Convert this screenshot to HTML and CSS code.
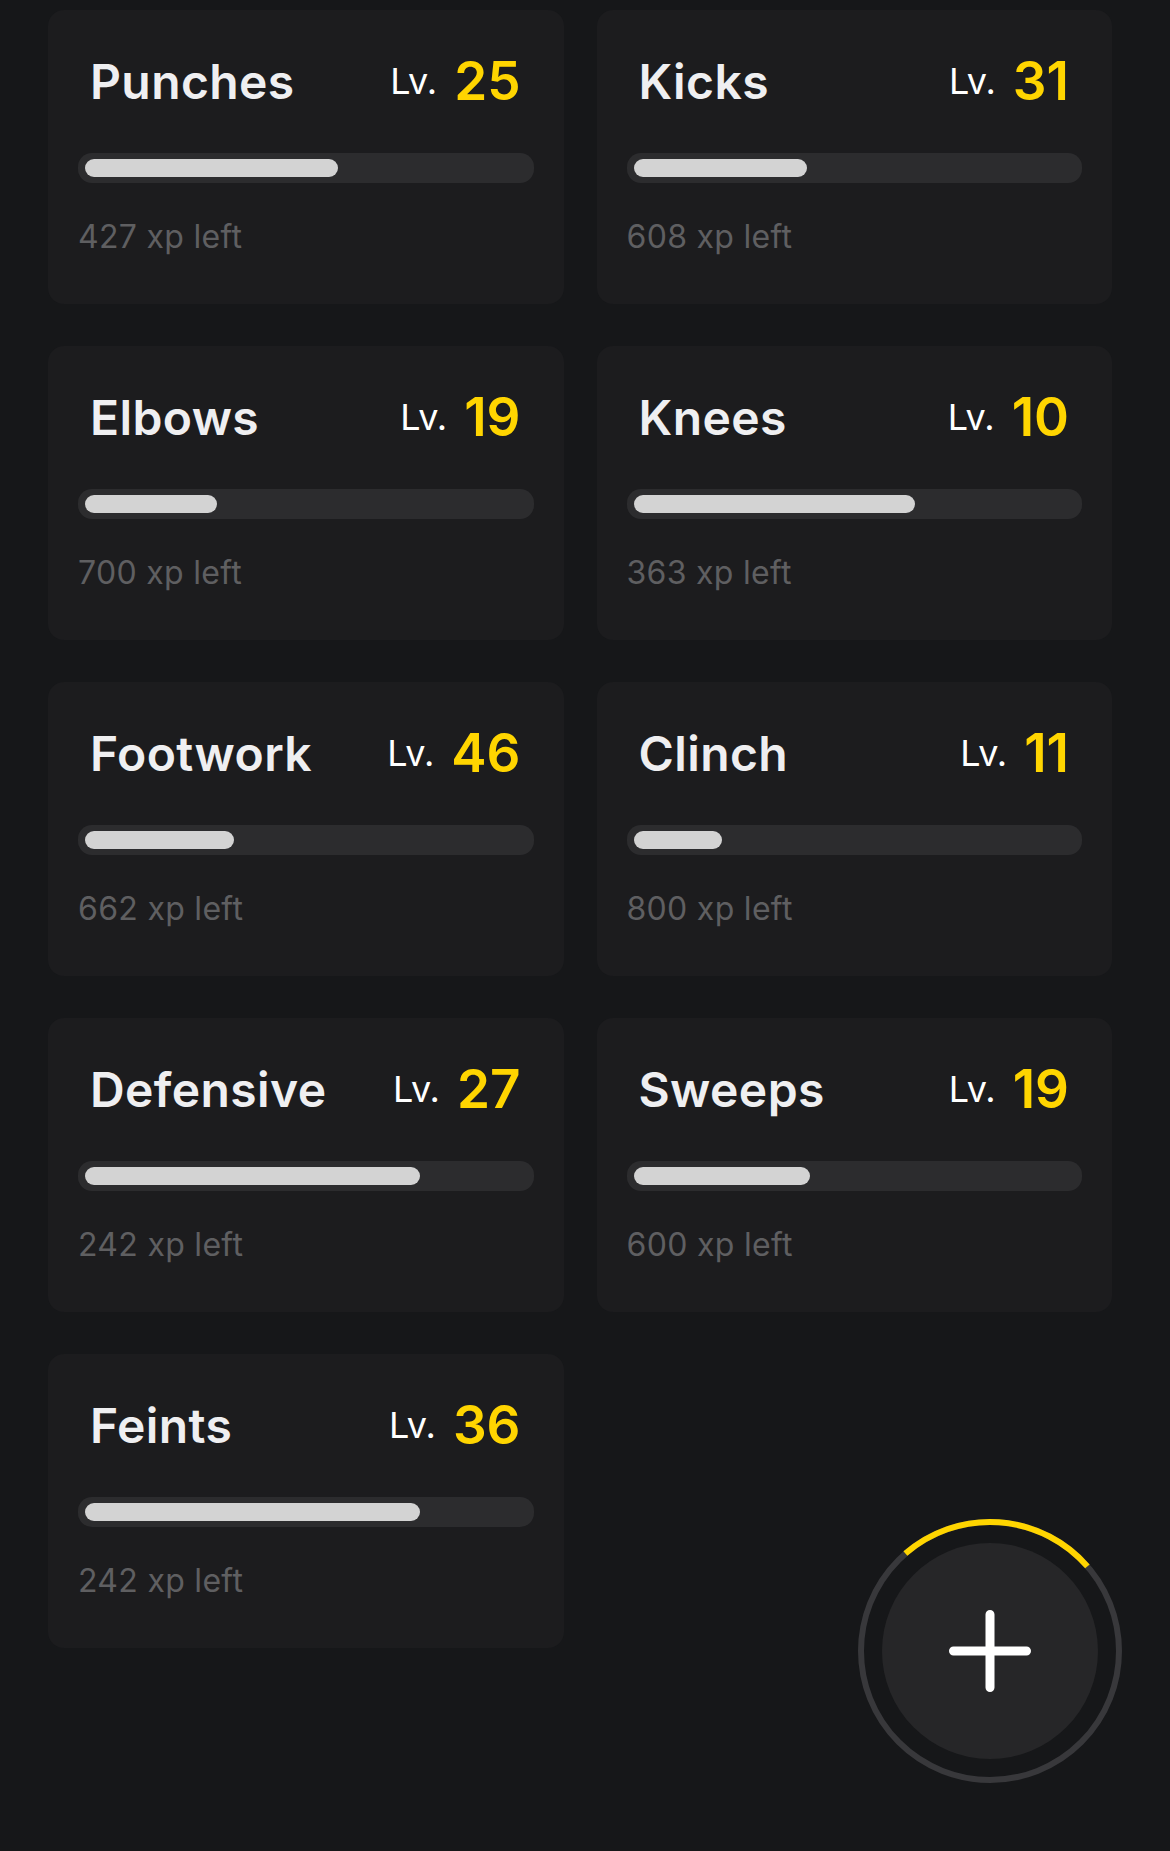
FILE: index.html
```html
<!DOCTYPE html>
<html lang="en">
<head>
<meta charset="utf-8">
<title>Skills</title>
<link rel="stylesheet" href="styles.css">
</head>
<body>
<main class="grid">
  <section class="card">
    <div class="head"><h2 class="name">Punches</h2><div class="lvl"><span class="lv">Lv.</span><span class="num">25</span></div></div>
    <div class="track"><div class="fill" style="width:57.3%"></div></div>
    <p class="xp">427 xp left</p>
  </section>
  <section class="card">
    <div class="head"><h2 class="name">Kicks</h2><div class="lvl"><span class="lv">Lv.</span><span class="num">31</span></div></div>
    <div class="track"><div class="fill" style="width:39.2%"></div></div>
    <p class="xp">608 xp left</p>
  </section>
  <section class="card">
    <div class="head"><h2 class="name">Elbows</h2><div class="lvl"><span class="lv">Lv.</span><span class="num">19</span></div></div>
    <div class="track"><div class="fill" style="width:30%"></div></div>
    <p class="xp">700 xp left</p>
  </section>
  <section class="card">
    <div class="head"><h2 class="name">Knees</h2><div class="lvl"><span class="lv">Lv.</span><span class="num">10</span></div></div>
    <div class="track"><div class="fill" style="width:63.7%"></div></div>
    <p class="xp">363 xp left</p>
  </section>
  <section class="card">
    <div class="head"><h2 class="name">Footwork</h2><div class="lvl"><span class="lv">Lv.</span><span class="num">46</span></div></div>
    <div class="track"><div class="fill" style="width:33.8%"></div></div>
    <p class="xp">662 xp left</p>
  </section>
  <section class="card">
    <div class="head"><h2 class="name">Clinch</h2><div class="lvl"><span class="lv">Lv.</span><span class="num">11</span></div></div>
    <div class="track"><div class="fill" style="width:20%"></div></div>
    <p class="xp">800 xp left</p>
  </section>
  <section class="card">
    <div class="head"><h2 class="name">Defensive</h2><div class="lvl"><span class="lv">Lv.</span><span class="num">27</span></div></div>
    <div class="track"><div class="fill" style="width:75.8%"></div></div>
    <p class="xp">242 xp left</p>
  </section>
  <section class="card">
    <div class="head"><h2 class="name">Sweeps</h2><div class="lvl"><span class="lv">Lv.</span><span class="num">19</span></div></div>
    <div class="track"><div class="fill" style="width:40%"></div></div>
    <p class="xp">600 xp left</p>
  </section>
  <section class="card">
    <div class="head"><h2 class="name">Feints</h2><div class="lvl"><span class="lv">Lv.</span><span class="num">36</span></div></div>
    <div class="track"><div class="fill" style="width:75.8%"></div></div>
    <p class="xp">242 xp left</p>
  </section>
</main>
<button class="fab" aria-label="Add">
  <svg width="270" height="270" viewBox="0 0 270 270">
    <circle cx="135" cy="135" r="129" fill="none" stroke="#38383b" stroke-width="6"/>
    <path d="M50.4 37.6 A129 129 0 0 1 232.4 50.4" fill="none" stroke="#ffd500" stroke-width="6"/>
    <circle cx="135" cy="135" r="108" fill="#262628"/>
    <path d="M98.5 135 H171.5 M135 98.5 V171.5" stroke="#ffffff" stroke-width="9" stroke-linecap="round"/>
  </svg>
</button>
</body>
</html>
```
FILE: styles.css
```css
* { box-sizing: border-box; }
html, body {
  margin: 0;
  padding: 0;
  background: #161719;
}
body {
  width: 1170px;
  height: 1851px;
  position: relative;
  font-family: Inter, "Noto Sans", sans-serif;
  overflow: hidden;
}
.grid {
  display: grid;
  grid-template-columns: 1fr 1fr;
  column-gap: 33px;
  row-gap: 42px;
  padding: 10px 58px 0 48px;
}
.card {
  height: 294px;
  background: #1c1c1e;
  border-radius: 16px;
  padding: 41px 30px 0 30px;
}
.head {
  height: 60px;
  display: flex;
  align-items: center;
  justify-content: space-between;
  padding: 0 13px 0 12px;
}
.name {
  margin: 0;
  font-size: 48px;
  font-weight: 600;
  color: #efeff1;
  letter-spacing: 0.4px;
}
.lvl {
  display: flex;
  align-items: center;
  gap: 17px;
}
.lv {
  font-size: 36px;
  font-weight: 400;
  color: #ffffff;
}
.num {
  font-size: 53px;
  font-weight: 600;
  color: #ffd500;
}
.track {
  margin-top: 42px;
  height: 30px;
  border-radius: 14px;
  background: #2c2c2e;
  padding: 6px 7px;
}
.fill {
  height: 18px;
  border-radius: 9px;
  background: #d3d3d3;
}
.xp {
  margin: 34px 0 0 0;
  font-size: 32px;
  line-height: 40px;
  letter-spacing: 0.3px;
  color: #5f5f61;
}
.fab {
  position: absolute;
  left: 855px;
  top: 1516px;
  width: 270px;
  height: 270px;
  padding: 0;
  border: 0;
  background: transparent;
}
.fab svg { display: block; }
```
